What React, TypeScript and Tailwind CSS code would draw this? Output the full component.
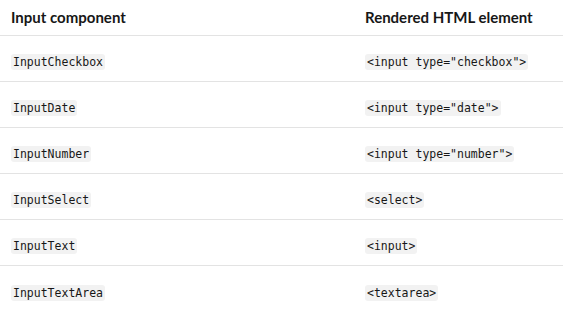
import React from 'react';

const rows = [
  ['InputCheckbox', '<input type="checkbox">'],
  ['InputDate', '<input type="date">'],
  ['InputNumber', '<input type="number">'],
  ['InputSelect', '<select>'],
  ['InputText', '<input>'],
  ['InputTextArea', '<textarea>'],
];

function Code({ children }: { children: React.ReactNode }) {
  return (
    <code className="bg-[#f2f2f2] rounded-[3px] px-[2px] py-[1px] text-[11.5px] leading-[15px] text-[#171717] [font-family:'DejaVu_Sans_Mono',monospace]">
      {children}
    </code>
  );
}

export default function App() {
  return (
    <div className="w-[563px] h-[319px] bg-white text-[#171717] [font-family:'Lato','Liberation_Sans',sans-serif]">
      <div className="grid grid-cols-[354px_1fr] h-[36px] border-b border-[#e3e3e3] items-center">
        <div className="pl-[11px] text-[15px] font-bold">Input component</div>
        <div className="pl-[11px] text-[15px] font-bold">Rendered HTML element</div>
      </div>
      {rows.map(([name, el], i) => (
        <div
          key={name}
          className={
            i === rows.length - 1
              ? 'grid grid-cols-[354px_1fr] h-[46px] items-center pt-[3px]'
              : 'grid grid-cols-[354px_1fr] h-[46px] border-b border-[#e3e3e3] items-center pt-[3px]'
          }
        >
          <div className="pl-[11px]">
            <Code>{name}</Code>
          </div>
          <div className="pl-[11px]">
            <Code>{el}</Code>
          </div>
        </div>
      ))}
    </div>
  );
}
